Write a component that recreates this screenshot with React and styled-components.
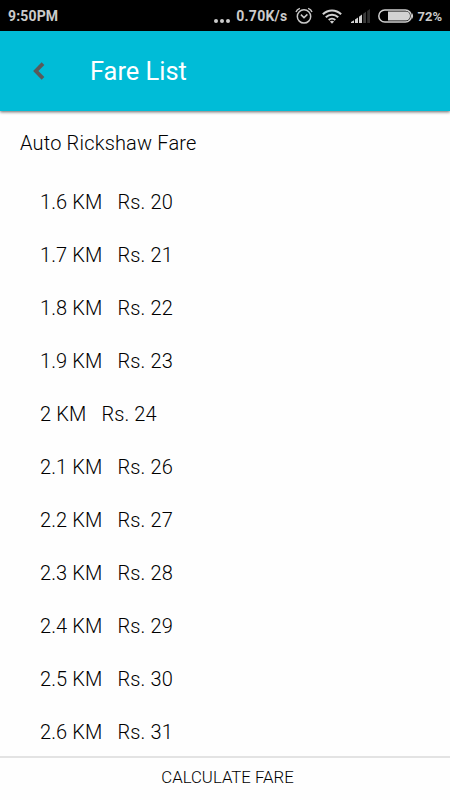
import React from 'react';
import styled, { createGlobalStyle } from 'styled-components';

const fares = [
  { distance: '1.6 KM', price: 'Rs. 20' },
  { distance: '1.7 KM', price: 'Rs. 21' },
  { distance: '1.8 KM', price: 'Rs. 22' },
  { distance: '1.9 KM', price: 'Rs. 23' },
  { distance: '2 KM', price: 'Rs. 24' },
  { distance: '2.1 KM', price: 'Rs. 26' },
  { distance: '2.2 KM', price: 'Rs. 27' },
  { distance: '2.3 KM', price: 'Rs. 28' },
  { distance: '2.4 KM', price: 'Rs. 29' },
  { distance: '2.5 KM', price: 'Rs. 30' },
  { distance: '2.6 KM', price: 'Rs. 31' },
];

const AlarmIcon = () => (
  <svg width="18" height="18" viewBox="0 0 18 18" fill="none" stroke="#c8c8c8">
    <circle cx="9" cy="9.4" r="6.7" strokeWidth="1.5" />
    <path d="M5.9 7.6 L9 10.6 L12.4 7.4" strokeWidth="1.5" />
    <path d="M1 4.9 Q1.9 2.3 4.9 1.3 M13.1 1.3 Q16.1 2.3 17 4.9" strokeWidth="1.4" />
  </svg>
);

const WifiIcon = () => (
  <svg width="20" height="15" viewBox="0 0 20 15" fill="none" stroke="#d2d2d2">
    <path d="M0.9 5.3 C6 0.2 14 0.2 19.1 5.3" strokeWidth="2.1" />
    <path d="M3.8 8.3 C7.3 4.8 12.7 4.8 16.2 8.3" strokeWidth="2" />
    <path d="M6.7 11 C8.6 9.2 11.4 9.2 13.3 11" strokeWidth="1.9" />
    <path d="M7.9 12.5 Q10 10.9 12.1 12.5 L10 14.7 Z" fill="#d2d2d2" stroke="none" />
  </svg>
);

const SignalIcon = () => (
  <svg width="20" height="15" viewBox="0 0 20 15">
    <path d="M0 13 L3 11.2 V14 H0 Z" fill="#d2d2d2" />
    <path d="M4 10.6 L7 8.6 V14 H4 Z" fill="#d2d2d2" />
    <path d="M8 7.8 L11 5.6 V14 H8 Z" fill="#d2d2d2" />
    <path d="M12.2 4.8 L15 2.8 V14 H12.2 Z" fill="#3c3c3c" />
    <path d="M16.2 2 L19 0 V14 H16.2 Z" fill="#2e2e2e" />
  </svg>
);

const BatteryIcon = () => (
  <svg width="36" height="14" viewBox="0 0 36 14">
    <rect x="0.8" y="0.9" width="32.6" height="12.2" rx="6" fill="none" stroke="#cfcfcf" strokeWidth="1.5" />
    <path d="M10 2.6 H28.4 Q32 3 32 7 Q32 11 28.4 11.4 H10 Z" fill="#d2d2d2" />
    <path d="M34 4 Q36.2 7 34 10 Z" fill="#cfcfcf" />
  </svg>
);

const App = () => {
  return (
    <>
      <GlobalStyle />
      <Screen>
        <StatusBar>
          <Clock>9:50PM</Clock>
          <Dots>
            <i />
            <i />
            <i />
          </Dots>
          <Speed>0.70K/s</Speed>
          <StatusIcon $gap={8}>
            <AlarmIcon />
          </StatusIcon>
          <StatusIcon $gap={9}>
            <WifiIcon />
          </StatusIcon>
          <StatusIcon $gap={9}>
            <SignalIcon />
          </StatusIcon>
          <StatusIcon $gap={7}>
            <BatteryIcon />
          </StatusIcon>
          <Percent>72%</Percent>
        </StatusBar>

        <Header>
          <BackButton aria-label="Back">
            <svg width="12" height="18" viewBox="0 0 12 18" fill="none">
              <path d="M10 1.7 L2.8 9 L10 16.3" stroke="#5a5a5a" strokeWidth="3.8" />
            </svg>
          </BackButton>
          <Title>Fare List</Title>
        </Header>

        <Content>
          <SectionTitle>Auto Rickshaw Fare</SectionTitle>
          <FareList>
            {fares.map((fare) => (
              <FareRow key={fare.distance}>
                <span>{fare.distance}</span>
                <span>{fare.price}</span>
              </FareRow>
            ))}
          </FareList>
        </Content>

        <CalculateButton>CALCULATE FARE</CalculateButton>
      </Screen>
    </>
  );
};

export default App;

const GlobalStyle = createGlobalStyle`
  * {
    box-sizing: border-box;
  }
  body {
    margin: 0;
    background: #fefefe;
    font-family: Roboto, sans-serif;
  }
`;

const Screen = styled.div`
  display: flex;
  flex-direction: column;
  width: 450px;
  height: 800px;
  overflow: hidden;
  background: #fefefe;
`;

const StatusBar = styled.div`
  display: flex;
  align-items: center;
  flex: 0 0 31px;
  padding: 1px 8px 0 8px;
  background: #000;
  color: #cbcbcb;
  font-weight: 700;
  white-space: nowrap;
`;

const Clock = styled.span`
  font-size: 14px;
  letter-spacing: 0.15px;
  margin-right: auto;
`;

const Dots = styled.span`
  display: flex;
  gap: 2px;
  margin: 9px 6px 0 0;
  i {
    width: 4px;
    height: 4px;
    border-radius: 50%;
    background: #cbcbcb;
  }
`;

const Speed = styled.span`
  font-size: 14px;
  letter-spacing: 0.25px;
`;

const StatusIcon = styled.span`
  display: flex;
  margin-left: ${({ $gap }) => $gap}px;
`;

const Percent = styled.span`
  font-size: 13px;
  margin-left: 3px;
`;

const Header = styled.header`
  display: flex;
  align-items: center;
  flex: 0 0 80px;
  position: relative;
  background: #00bcd7;
  box-shadow: 0 1px 3px rgba(0, 0, 0, 0.6);
`;

const BackButton = styled.button`
  display: flex;
  margin: 0 45px 0 33px;
  padding: 0;
  border: none;
  background: none;
`;

const Title = styled.h1`
  margin: 0;
  color: #fff;
  font-size: 25.4px;
  font-weight: 400;
  line-height: 30px;
`;

const Content = styled.main`
  flex: 1;
  min-height: 0;
  overflow: hidden;
  color: #000;
`;

const SectionTitle = styled.h2`
  margin: 20px 0 20px 20px;
  font-size: 20px;
  font-weight: 300;
  line-height: 24px;
  letter-spacing: 0.18px;
`;

const FareList = styled.ul`
  margin: 0;
  padding: 0 0 0 40px;
  list-style: none;
`;

const FareRow = styled.li`
  display: flex;
  align-items: center;
  gap: 15px;
  height: 53px;
  font-size: 20px;
  font-weight: 300;
  letter-spacing: 0.12px;
`;

const CalculateButton = styled.button`
  flex: 0 0 44px;
  padding: 0 0 4px 5px;
  border: none;
  border-top: 2px solid #e3e3e3;
  background: #fefefe;
  color: #000;
  font-family: inherit;
  font-size: 16.8px;
  font-weight: 300;
`;
